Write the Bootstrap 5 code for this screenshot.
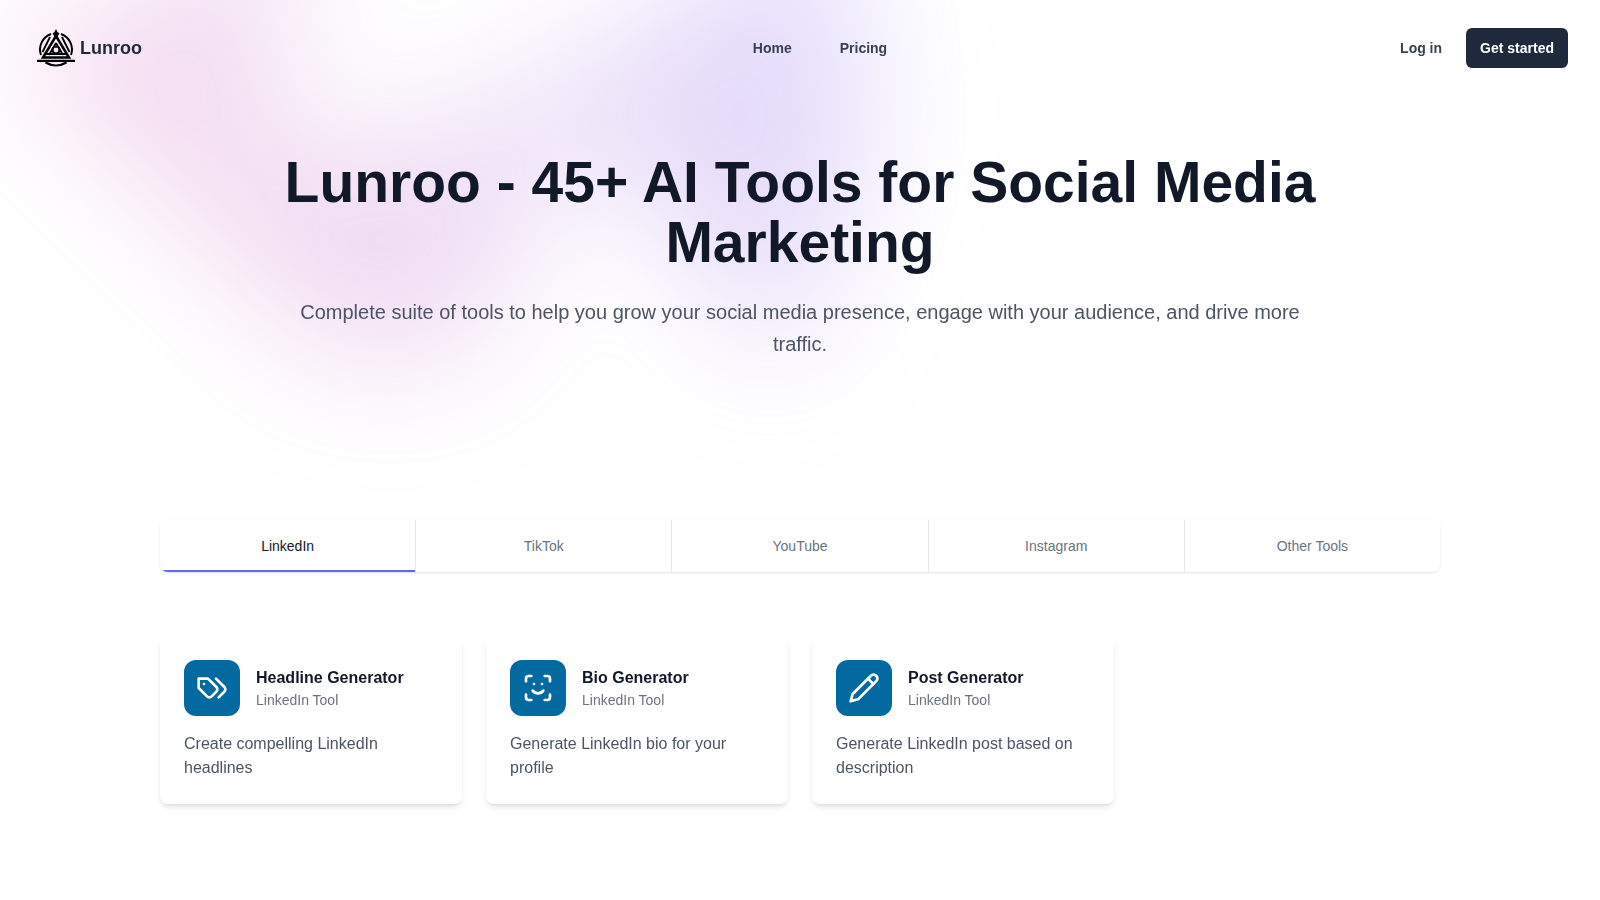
<!DOCTYPE html>
<html lang="en">
<head>
<meta charset="utf-8">
<meta name="viewport" content="width=device-width, initial-scale=1">
<title>Lunroo</title>
<link href="https://cdn.jsdelivr.net/npm/bootstrap@5.3.0/dist/css/bootstrap.min.css" rel="stylesheet">
<style>
  body { font-family: "Liberation Sans", Arial, sans-serif; color: #111827; background: #fff; overflow-x: hidden; }
  a { text-decoration: none; }
  .glow { position: absolute; left: 0; right: 0; top: -320px; z-index: -1; overflow: hidden; filter: blur(64px); transform: translate3d(0, 0, 0); pointer-events: none; }
  .glow-shape {
    position: relative; z-index: -1;
    width: 1155px; aspect-ratio: 1155 / 678; margin-left: calc(50% - 480px);
    transform: translate3d(-50%, 0, 0) rotate(30deg); opacity: .3;
    background: linear-gradient(to top right, #ff80b5, #9089fc);
    clip-path: polygon(74.1% 44.1%, 100% 61.6%, 97.5% 26.9%, 85.5% 0.1%, 80.7% 2%, 72.5% 32.5%, 60.2% 62.4%, 52.4% 68.1%, 47.5% 58.3%, 45.2% 34.5%, 27.5% 76.7%, 0.1% 64.9%, 17.9% 100%, 27.6% 76.8%, 76.1% 97.7%, 74.1% 44.1%);
  }
  .site-nav { padding: 24px 32px; }
  .brand { font-size: 18px; line-height: 28px; color: #1f2937; }
  .menu { padding-left: 40px; }
  .menu-link { font-size: 14px; line-height: 24px; color: #374151; }
  .btn-start { font-size: 14px; line-height: 20px; padding: 10px 14px; border: 0; border-radius: 6px; background: #1e293b; color: #fff; }
  .btn-start:hover { background: #334155; color: #fff; }
  .hero { max-width: 1040px; padding: 56px 0 160px; }
  .hero h1 { font-size: 57px; line-height: 60px; color: #111827; }
  .hero p { font-size: 20px; line-height: 32px; color: #4b5563; }
  .tools { max-width: 1280px; }
  .tool-tabs { border-radius: 8px; overflow: hidden; background: #fff; box-shadow: 0 1px 3px rgba(0,0,0,.1), 0 1px 2px -1px rgba(0,0,0,.1); }
  .tool-tabs button { flex: 1 1 0; border: 0; background: #fff; padding: 16px; font-size: 14px; line-height: 20px; color: #6b7280; }
  .tool-tabs button + button { border-left: 1px solid #e5e7eb; }
  .tool-tabs button.active { color: #111827; box-shadow: inset 0 -2px #6366f1; }
  .tool-grid { display: grid; grid-template-columns: repeat(auto-fill, minmax(280px, 1fr)); gap: 24px; padding: 64px 0; }
  .tool-card { padding: 24px; border-radius: 8px; background: #fff; box-shadow: 0 4px 6px -1px rgba(0,0,0,.1), 0 2px 4px -2px rgba(0,0,0,.1); }
  .tool-icon { width: 56px; height: 56px; border-radius: 12px; background: #0369a1; color: #fff; }
  .tool-card h2 { font-size: 16px; line-height: 24px; color: #111827; }
  .tool-kind { font-size: 14px; line-height: 20px; color: #6b7280; }
  .tool-text { font-size: 16px; line-height: 24px; color: #4b5563; }
</style>
</head>
<body>
<div class="position-relative">
  <div class="glow" aria-hidden="true"><div class="glow-shape"></div></div>
  <header>
    <nav class="site-nav d-flex align-items-center justify-content-between" aria-label="Main">
      <div class="col d-flex">
        <a class="brand d-flex align-items-center fw-bold" href="#">
          <svg width="48" height="48" viewBox="0 0 48 48" fill="none" stroke="#000" aria-hidden="true">
            <path d="M24 5l1.500 3 2 1.500-1.500 2-.5 3h-3l-.5-3-1.500-2 2-1.500z" fill="#000" stroke="none"/>
            <path d="M19 10A16.500 16.500 0 0 0 9 31M29 10A16.500 16.500 0 0 1 39 31" stroke-width="2"/>
            <path d="M18 13L10.500 28M30 13L37.500 28" stroke-width="1.800"/>
            <path d="M24 12L11 33.500h26z" stroke-width="2.500"/>
            <path d="M24 19L17 31M24 19L31 31M14 30h20" stroke-width="1.800"/>
            <circle cx="24" cy="26" r="3.500" stroke-width="2.200" fill="#f7e6f5"/>
            <path d="M5 36.800h38" stroke-width="2.200"/>
            <path d="M13.500 38.500Q24 44.500 34.500 38.500" stroke-width="2.200"/>
          </svg>
          <span>Lunroo</span>
        </a>
      </div>
      <div class="menu d-flex gap-5">
        <a class="menu-link fw-bold" href="#">Home</a>
        <a class="menu-link fw-bold" href="#pricing">Pricing</a>
      </div>
      <div class="col d-flex justify-content-end align-items-center gap-4">
        <a class="menu-link fw-bold" href="#login">Log in</a>
        <button type="button" class="btn-start fw-bold">Get started</button>
      </div>
    </nav>
  </header>
  <main>
    <section class="hero mx-auto text-center">
      <h1 class="fw-bold mb-4">Lunroo - 45+ AI Tools for Social Media Marketing</h1>
      <p class="mb-0">Complete suite of tools to help you grow your social media presence, engage with your audience, and drive more traffic.</p>
    </section>
    <section class="tools mx-auto">
      <div class="tool-tabs d-flex" role="tablist" aria-label="Platforms">
        <button type="button" role="tab" class="active" aria-selected="true">LinkedIn</button>
        <button type="button" role="tab" aria-selected="false">TikTok</button>
        <button type="button" role="tab" aria-selected="false">YouTube</button>
        <button type="button" role="tab" aria-selected="false">Instagram</button>
        <button type="button" role="tab" aria-selected="false">Other Tools</button>
      </div>
      <div class="tool-grid">
        <article class="tool-card">
          <div class="d-flex align-items-center gap-3 mb-3">
            <div class="tool-icon d-flex align-items-center justify-content-center">
              <svg width="32" height="32" viewBox="0 0 24 24" fill="none" stroke="currentColor" stroke-width="2" stroke-linecap="round" stroke-linejoin="round" aria-hidden="true"><path d="M9 5H2v7l6.290 6.290c.94.94 2.480.94 3.420 0l3.580-3.580c.94-.94.94-2.480 0-3.420L9 5Z"/><path d="M6 9.010V9"/><path d="m15 5 6.300 6.300a2.400 2.400 0 0 1 0 3.400L17 19"/></svg>
            </div>
            <div><h2 class="fw-bold mb-0">Headline Generator</h2><div class="tool-kind">LinkedIn Tool</div></div>
          </div>
          <p class="tool-text mb-0">Create compelling LinkedIn headlines</p>
        </article>
        <article class="tool-card">
          <div class="d-flex align-items-center gap-3 mb-3">
            <div class="tool-icon d-flex align-items-center justify-content-center">
              <svg width="32" height="32" viewBox="0 0 24 24" fill="none" stroke="currentColor" stroke-width="2" stroke-linecap="round" stroke-linejoin="round" aria-hidden="true"><path d="M3 7V5a2 2 0 0 1 2-2h2"/><path d="M17 3h2a2 2 0 0 1 2 2v2"/><path d="M21 17v2a2 2 0 0 1-2 2h-2"/><path d="M7 21H5a2 2 0 0 1-2-2v-2"/><path d="M8 14s1.500 2 4 2 4-2 4-2"/><path d="M9 9h.01"/><path d="M15 9h.01"/></svg>
            </div>
            <div><h2 class="fw-bold mb-0">Bio Generator</h2><div class="tool-kind">LinkedIn Tool</div></div>
          </div>
          <p class="tool-text mb-0">Generate LinkedIn bio for your profile</p>
        </article>
        <article class="tool-card">
          <div class="d-flex align-items-center gap-3 mb-3">
            <div class="tool-icon d-flex align-items-center justify-content-center">
              <svg width="32" height="32" viewBox="0 0 24 24" fill="none" stroke="currentColor" stroke-width="2" stroke-linecap="round" stroke-linejoin="round" aria-hidden="true"><path d="M17 3a2.850 2.830 0 1 1 4 4L7.500 20.500 2 22l1.500-5.500Z"/><path d="m15 5 4 4"/></svg>
            </div>
            <div><h2 class="fw-bold mb-0">Post Generator</h2><div class="tool-kind">LinkedIn Tool</div></div>
          </div>
          <p class="tool-text mb-0">Generate LinkedIn post based on description</p>
        </article>
      </div>
    </section>
  </main>
</div>
<script src="https://cdn.jsdelivr.net/npm/bootstrap@5.3.0/dist/js/bootstrap.bundle.min.js"></script>
</body>
</html>
